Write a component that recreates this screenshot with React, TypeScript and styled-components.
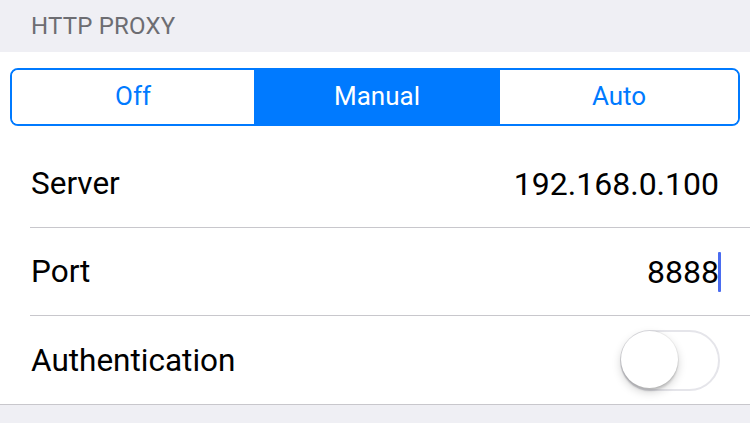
import React from "react";
import styled, { createGlobalStyle } from "styled-components";

const Global = createGlobalStyle`
  html, body { margin: 0; padding: 0; background: #efeff4; }
  body { font-family: Roboto, "Noto Sans", "Liberation Sans", sans-serif; -webkit-font-smoothing: antialiased; }
  #root { width: 750px; height: 423px; overflow: hidden; }
`;

const Page = styled.div`
  width: 750px;
  height: 423px;
  background: #efeff4;
  display: flex;
  flex-direction: column;
`;

const SectionHeader = styled.div`
  height: 52px;
  box-sizing: border-box;
  padding: 10px 0 0 31px;
  font-size: 24px;
  line-height: 32px;
  color: #6d6d72;
  letter-spacing: 0.2px;
`;

const Section = styled.div`
  background: #fff;
  border-bottom: 1px solid #c8c7cc;
  display: flex;
  flex-direction: column;
`;

const SegmentRow = styled.div`
  height: 88px;
  box-sizing: border-box;
  padding: 16px 10px 0 10px;
`;

const Segmented = styled.div`
  display: grid;
  grid-template-columns: 242px 246px 1fr;
  height: 58px;
  box-sizing: border-box;
  border: 2px solid #007aff;
  border-radius: 8px;
  overflow: hidden;
`;

const Segment = styled.div<{ $active?: boolean }>`
  display: flex;
  align-items: center;
  justify-content: center;
  font-size: 26px;
  color: ${(p) => (p.$active ? "#fff" : "#007aff")};
  background: ${(p) => (p.$active ? "#007aff" : "#fff")};
  padding-bottom: 2px;
`;

const Row = styled.div<{ $last?: boolean }>`
  height: 88px;
  box-sizing: border-box;
  margin-left: 30px;
  padding-right: 31px;
  display: flex;
  align-items: center;
  justify-content: space-between;
  border-bottom: ${(p) => (p.$last ? "none" : "1px solid #c8c7cc")};
`;

const Label = styled.span`
  font-size: 31.5px;
  color: #000;
  padding-left: 1px;
`;

const Value = styled.span`
  font-size: 32px;
  color: #000;
  display: flex;
  align-items: center;
`;

const Caret = styled.span`
  display: inline-block;
  width: 3px;
  height: 40px;
  background: #4a6cf0;
  margin-left: -1px;
  margin-right: -2px;
  border-radius: 1px;
`;

const Toggle = styled.div`
  position: relative;
  width: 100px;
  height: 61px;
  box-sizing: border-box;
  border: 2px solid #e5e5ea;
  border-radius: 31px;
  background: #fff;
  margin-right: -1px;
`;

const Knob = styled.div`
  position: absolute;
  left: -1px;
  top: -1px;
  width: 57px;
  height: 57px;
  border-radius: 50%;
  background: #fff;
  box-shadow: 0 3px 2px rgba(0, 0, 0, 0.12), 0 4px 10px rgba(0, 0, 0, 0.18), 0 0 0 1px rgba(0, 0, 0, 0.05);
`;

export default function App() {
  return (
    <Page>
      <Global />
      <SectionHeader>HTTP PROXY</SectionHeader>
      <Section>
        <SegmentRow>
          <Segmented>
            <Segment>Off</Segment>
            <Segment $active>Manual</Segment>
            <Segment>Auto</Segment>
          </Segmented>
        </SegmentRow>
        <Row>
          <Label>Server</Label>
          <Value>192.168.0.100</Value>
        </Row>
        <Row>
          <Label>Port</Label>
          <Value>
            8888
            <Caret />
          </Value>
        </Row>
        <Row $last>
          <Label>Authentication</Label>
          <Toggle>
            <Knob />
          </Toggle>
        </Row>
      </Section>
    </Page>
  );
}
